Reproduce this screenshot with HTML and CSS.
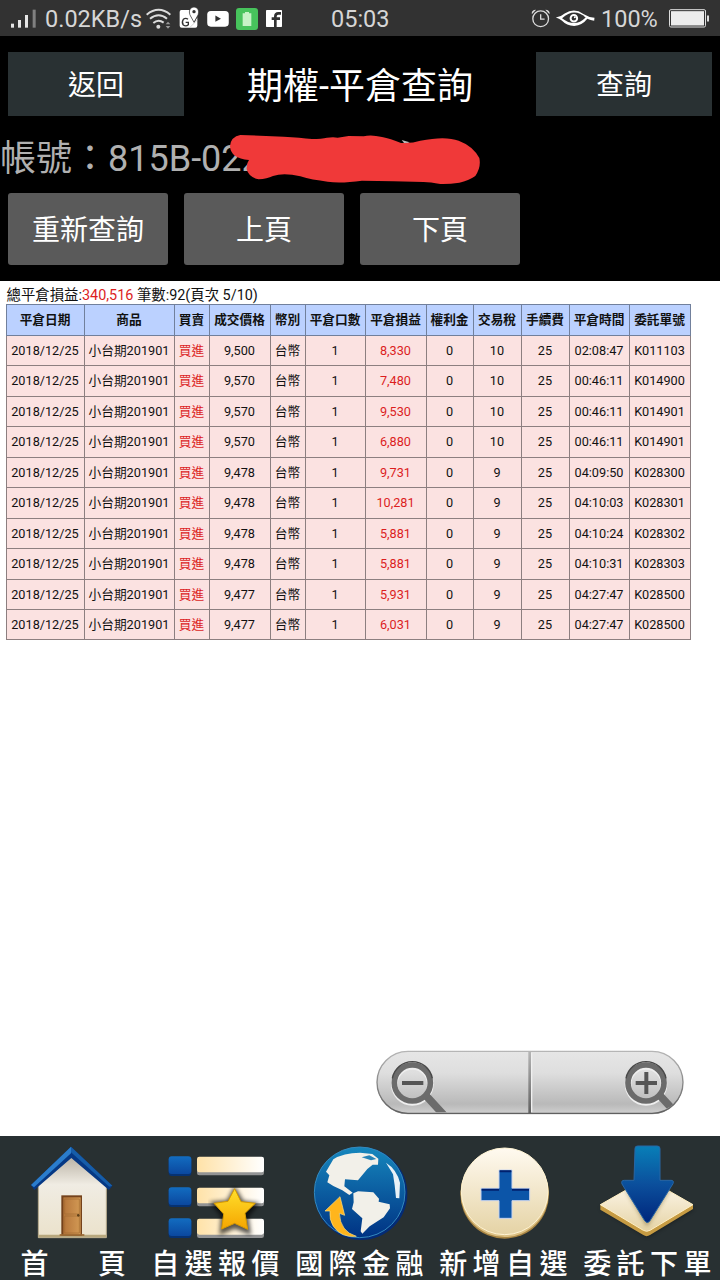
FILE: index.html
```html
<!DOCTYPE html>
<html lang="zh-Hant">
<head>
  <meta charset="UTF-8">
  <title>期權-平倉查詢</title>
  <link rel="stylesheet" href="styles.css">
</head>
<body>

  <div class="statusbar">
    <div class="status-left">
      <svg class="signal" viewBox="33 25 75 57">
        <g fill="#e6e6e6"><rect x="33" y="69" width="9" height="12"/><rect x="54" y="58" width="9" height="23"/><rect x="75" y="43" width="9" height="38"/></g>
        <rect x="98" y="27" width="9" height="54" fill="#808080"/>
      </svg>
      <span class="speed">0.02KB/s</span>
      <svg class="wifi" viewBox="438 22 78 63">
        <g fill="none" stroke="#dcdcdc" stroke-width="6"><path d="M440 42Q476 13 511 42"/><path d="M450 54Q476 33 501 54"/><path d="M460 67Q475 54 491 66"/></g>
        <circle cx="475" cy="78" r="6" fill="#dcdcdc"/>
        <path d="M497 71l7-8 7 8zM497 76l7 8 7-8z" fill="#999"/>
      </svg>
      <svg class="gmap" viewBox="538 19 60 63">
        <path d="M545 28H570Q567 40 579 57L584 66 593 50V75Q593 81 587 81H546Q540 81 540 75V34Q540 28 545 28Z" fill="#fff"/>
        <path d="M583 19Q596 20 597 34 597 42 590 52L583 65 576 52Q569 42 569 34 570 20 583 19Z" fill="#fff" stroke="#323232" stroke-width="2"/>
        <circle cx="583" cy="33" r="5" fill="#323232"/>
        <path d="M565 56Q558 50 551 56 545 65 551 73 559 79 566 72V65H558" fill="none" stroke="#323232" stroke-width="4"/>
        <path d="M571 80L593 58" stroke="#bbb" stroke-width="2"/>
      </svg>
      <svg class="youtube" viewBox="621 30 66 49">
        <rect x="621" y="30" width="66" height="48" rx="11" fill="#fff"/><path d="M646 44v19l17-9.500z" fill="#323232"/>
      </svg>
      <svg class="saver" viewBox="708 21 66 66">
        <rect x="708" y="21" width="66" height="66" rx="9" fill="#47c35c"/><path d="M728 37h7v-4h12v4h7v38h-26z" fill="#c7f3c7"/>
      </svg>
      <svg class="facebook" viewBox="798 30 48 51">
        <rect x="798" y="30" width="48" height="51" rx="2" fill="#fff"/><path d="M843 40h-8q-9 0-9 10v31M815 56h25" stroke="#323232" stroke-width="8" fill="none"/>
      </svg>
    </div>
    <span class="clock">05:03</span>
    <div class="status-right">
      <svg class="alarm" viewBox="692 25 60 58">
        <circle cx="721" cy="55" r="24" fill="none" stroke="#ddd" stroke-width="4"/>
        <path d="M721 41v15h12" fill="none" stroke="#ddd" stroke-width="4"/>
        <path d="M694 41q-2-14 13-14zM748 41q2-14-13-14z" fill="#ddd"/>
      </svg>
      <svg class="eye" viewBox="764 25 124 58">
        <path d="M766 51Q782 49 793 39 822 20 850 40 866 50 884 52L883 61Q872 59 862 55 847 75 822 77 799 76 784 60 776 54 766 51Z" fill="#fff"/>
        <path d="M785 53Q822 19 857 51 824 84 785 53Z" fill="#323232"/>
        <circle cx="821" cy="53" r="10" fill="none" stroke="#fff" stroke-width="6"/><circle cx="824" cy="50" r="3" fill="#fff"/>
      </svg>
      <span class="percent">100%</span>
      <svg class="battery" viewBox="1107 26 120 56">
        <rect x="1108.500" y="27.500" width="108" height="52" rx="4" fill="none" stroke="#ddd" stroke-width="3"/>
        <rect x="1113" y="32" width="99" height="43" fill="#ececec"/><rect x="1221" y="45" width="6" height="18" fill="#ddd"/>
      </svg>
    </div>
  </div>

  <header>
    <button class="nav-btn">返回</button>
    <h1>期權-平倉查詢</h1>
    <button class="nav-btn">查詢</button>
  </header>

  <div class="account">
    帳號：815B-022
    <svg class="scribble" viewBox="680 270 770 180">
      <path d="M1204 300l24 7-14 6z" fill="#bbb"/>
      <path d="M720 285L850 290Q900 293 935 297 965 297 980 293 1000 291 1012 293L1045 288 1090 289Q1112 283 1145 291 1170 296 1202 309 1235 311 1260 302 1335 287 1375 302 1418 318 1437 354 1443 382 1425 408 1405 422 1377 428 1345 433 1320 432 1290 426 1270 426L1180 424 1085 422Q1020 431 982 425 935 420 900 409 850 397 818 408 800 417 775 418 745 412 739 388 738 370 746 360 690 355 689 318 692 290 720 285Z" fill="#f03939"/>
    </svg>
  </div>

  <div class="toolbar">
    <button class="page-btn">重新查詢</button>
    <button class="page-btn">上頁</button>
    <button class="page-btn">下頁</button>
  </div>

  <main>
    <p class="summary">總平倉損益:<span class="red">340,516</span> 筆數:92(頁次 5/10)</p>
    <table>
      <colgroup>
        <col class="w78"><col class="w90"><col class="w35"><col class="w61"><col class="w35"><col class="w60">
        <col class="w61"><col class="w47"><col class="w48"><col class="w48"><col class="w60"><col class="w61">
      </colgroup>
      <thead>
        <tr>
          <th>平倉日期</th><th>商品</th><th>買賣</th><th>成交價格</th><th>幣別</th><th>平倉口數</th>
          <th>平倉損益</th><th>權利金</th><th>交易稅</th><th>手續費</th><th>平倉時間</th><th>委託單號</th>
        </tr>
      </thead>
      <tbody id="rows"></tbody>
    </table>

    <svg class="zoom-control" viewBox="0 0 990 255">
      <defs>
        <linearGradient id="pill" x2="0" y2="1"><stop stop-color="#e6e6e6"/><stop offset=".35" stop-color="#dedede"/><stop offset=".85" stop-color="#b9b9b9"/><stop offset="1" stop-color="#cfcfcf"/></linearGradient>
        <linearGradient id="edge" x2="0" y2="1"><stop stop-color="#b5b5b5"/><stop offset="1" stop-color="#606060"/></linearGradient>
        <clipPath id="pillClip"><rect x="22" y="36" width="916" height="181" rx="90"/></clipPath>
      </defs>
      <rect x="21" y="36" width="918" height="187" rx="93" fill="#aaa"/>
      <rect x="21" y="34" width="918" height="186" rx="93" fill="url(#pill)" stroke="url(#edge)" stroke-width="4"/>
      <path d="M485 38V216" stroke="#f0f0f0" stroke-width="4"/>
      <rect x="475" y="35" width="8" height="185" fill="url(#edge)"/>
      <g clip-path="url(#pillClip)">
        <g fill="none" stroke="#eee" stroke-width="20"><circle cx="127" cy="133" r="54"/><circle cx="828" cy="133" r="54"/></g>
        <g stroke="#6b6b6b" stroke-width="23"><path d="M168 167L226 230M870 167L928 230"/></g>
        <g fill="none" stroke="#6b6b6b" stroke-width="17"><circle cx="127" cy="129" r="54"/><circle cx="828" cy="129" r="54"/></g>
        <g fill="none" stroke="#484848" stroke-width="4"><path d="M67 115A61 61 0 0 1 187 115M768 115A61 61 0 0 1 888 115"/></g>
        <g stroke="#555" stroke-width="12"><path d="M96 129H160M797 129H861M829 96V162"/></g>
      </g>
    </svg>
  </main>

  <footer>
    <a class="tab">
      <svg viewBox="0 18 432 318">
        <defs>
          <linearGradient id="blue" x2="0" y2="1"><stop stop-color="#1687bd"/><stop offset="1" stop-color="#003283"/></linearGradient>
          <linearGradient id="arrow" x2="0" y2="1"><stop stop-color="#087fb8"/><stop offset=".5" stop-color="#0b4f9c"/><stop offset="1" stop-color="#00267c"/></linearGradient>
          <linearGradient id="blueBox" x2="0" y2="1"><stop stop-color="#126cc0"/><stop offset="1" stop-color="#0b489f"/></linearGradient>
          <linearGradient id="cream" x2="0" y2="1"><stop stop-color="#fffaf0"/><stop offset="1" stop-color="#e5d3a5"/></linearGradient>
          <linearGradient id="wall" x2="0" y2="1"><stop stop-color="#b8b1a4"/><stop offset=".35" stop-color="#f0ece3"/><stop offset="1" stop-color="#ebe2cb"/></linearGradient>
          <linearGradient id="bar"><stop stop-color="#ffe2a8"/><stop offset="1" stop-color="#fff"/></linearGradient>
          <linearGradient id="gold" x2="0" y2="1"><stop stop-color="#ffe02c"/><stop offset="1" stop-color="#f5a500"/></linearGradient>
          <linearGradient id="door"><stop stop-color="#b5753a"/><stop offset="1" stop-color="#d39a55"/></linearGradient>
          <filter id="soft"><feGaussianBlur stdDeviation="7"/></filter>
        </defs>
        <path d="M115 165L214 78 319 165V323H115Z" fill="url(#wall)" stroke="#b9ad8e" stroke-width="3"/>
        <path d="M115 318H319" stroke="#b8a87e" stroke-width="8"/>
        <rect x="184" y="196" width="62" height="121" fill="#74421b"/>
        <rect x="190" y="202" width="52" height="113" fill="url(#door)"/>
        <path d="M194 207H238V252H194ZM194 258H238V309H194Z" fill="none" stroke="#a16b31" stroke-width="2"/>
        <path d="M179 315H253" stroke="#9a6832" stroke-width="5"/><circle cx="235" cy="256" r="4" fill="#604018"/>
        <path d="M93 165L213 50 337 167 327 180 214 84 103 180Z" fill="#063884"/>
        <path d="M93 165L213 50 213 70 102 172Z" fill="#2b7dcc"/>
        <path d="M213 50L337 167 328 170 213 67Z" fill="#165da9"/>
      </svg>
      <span>首<i></i>頁</span>
    </a>
    <a class="tab">
      <svg viewBox="432 18 432 318">
        <g fill="#063273"><rect x="506" y="82" width="68" height="56" rx="9"/><rect x="506" y="175" width="68" height="56" rx="9"/><rect x="506" y="268" width="68" height="56" rx="9"/></g>
        <g fill="url(#blueBox)"><rect x="506" y="79" width="68" height="53" rx="9"/><rect x="506" y="172" width="68" height="53" rx="9"/><rect x="506" y="265" width="68" height="53" rx="9"/></g>
        <g fill="#929394"><rect x="591" y="85" width="201" height="51" rx="7"/><rect x="591" y="178" width="201" height="51" rx="7"/><rect x="591" y="271" width="201" height="53" rx="7"/></g>
        <g fill="url(#bar)"><rect x="591" y="80" width="201" height="47" rx="7"/><rect x="591" y="173" width="201" height="47" rx="7"/><rect x="591" y="266" width="201" height="48" rx="7"/></g>
        <path d="M704 178L727 217 769 223 740 259 747 308 704 290 664 308 668 256 638 220 684 216Z" fill="#000" stroke="#000" stroke-width="10" opacity=".65" filter="url(#soft)"/>
        <path d="M704 176L723 215 766 220 735 250 743 298 704 280 665 297 671 252 642 220 684 214Z" fill="url(#gold)" stroke="#d79a00" stroke-width="3" stroke-linejoin="round"/>
      </svg>
      <span>自選報價</span>
    </a>
    <a class="tab">
      <svg viewBox="-6 18 432 318">
        <circle cx="213" cy="191" r="139" fill="#032b76"/>
        <circle cx="209" cy="187" r="136" fill="url(#blue)" stroke="#3489be" stroke-width="3"/>
        <path d="M108 125L130 88Q160 68 210 68L247 72 265 86 264 104 248 104 232 117 204 151 165 148 163 169 188 188 178 195 157 181 130 168 112 157 118 136Z" fill="#f2f0e9"/>
        <path d="M215 82L238 76 259 87 243 91Z" fill="#2683b6"/>
        <path d="M190 190L204 184 250 187 267 206 266 215 299 223 300 235 281 262 239 289 217 311 212 304 217 265 186 237 191 217Z" fill="#f2f0e9"/>
        <path d="M288 98Q320 118 330 158L328 205 318 204 314 166 309 133Z" fill="#e9f1f7"/>
        <path d="M105 243L150 200 164 256 148 250Q151 305 199 319 154 324 130 289 117 268 120 243Z" fill="#ffb51c" stroke="#ffe084" stroke-width="2"/>
      </svg>
      <span>國際金融</span>
    </a>
    <a class="tab">
      <svg viewBox="6 18 432 318">
        <circle cx="224" cy="193" r="133" fill="#a98543"/>
        <circle cx="224" cy="189" r="132" fill="#ddc184"/>
        <circle cx="224" cy="184" r="130" fill="url(#cream)" stroke="#fff4d4" stroke-width="3"/>
        <path d="M207 120H246V175H299V212H246V265H207V212H153V175H207Z" fill="#0c55a8" stroke="#c8d4ee" stroke-width="3"/>
        <path d="M209 124H244M155 179H207M246 179H297" stroke="#00206d" stroke-width="6"/>
      </svg>
      <span>新增自選</span>
    </a>
    <a class="tab">
      <svg viewBox="438 18 432 318">
        <path d="M512 235L651 320 790 237 650 160Z" fill="#000" opacity=".5" filter="url(#soft)"/>
        <path d="M511 224L641 150Q650 145 660 150L789 224V237L660 315Q650 322 640 315L511 239Z" fill="#c69b43"/>
        <path d="M511 224L641 150Q650 145 660 150L789 224 660 301Q650 307 640 301Z" fill="url(#cream)" stroke="#fff0c5" stroke-width="3"/>
        <path d="M586 177L651 290 721 177Z" fill="#6b521e" opacity=".5" filter="url(#soft)"/>
        <path d="M615 55Q615 48 623 48H682Q690 48 690 56V151H723Q733 151 729 161L660 272Q652 283 644 272L576 162Q572 151 583 151H612Z" fill="url(#arrow)" stroke="#2866a4" stroke-width="3"/>
      </svg>
      <span>委託下單</span>
    </a>
  </footer>

  <script>
    // date, product and lot size are the same on every row
    const trades = [
      ['9,500', '8,330', '10', '02:08:47', 'K011103'],
      ['9,570', '7,480', '10', '00:46:11', 'K014900'],
      ['9,570', '9,530', '10', '00:46:11', 'K014901'],
      ['9,570', '6,880', '10', '00:46:11', 'K014901'],
      ['9,478', '9,731', '9', '04:09:50', 'K028300'],
      ['9,478', '10,281', '9', '04:10:03', 'K028301'],
      ['9,478', '5,881', '9', '04:10:24', 'K028302'],
      ['9,478', '5,881', '9', '04:10:31', 'K028303'],
      ['9,477', '5,931', '9', '04:27:47', 'K028500'],
      ['9,477', '6,031', '9', '04:27:47', 'K028500']
    ];

    document.getElementById('rows').innerHTML = trades.map(([price, profit, tax, time, order]) => `
      <tr>
        <td>2018/12/25</td><td>小台期201901</td><td class="red">買進</td><td>${price}</td>
        <td>台幣</td><td>1</td><td class="red">${profit}</td><td>0</td>
        <td>${tax}</td><td>25</td><td>${time}</td><td>${order}</td>
      </tr>`).join('');
  </script>

</body>
</html>
```
FILE: styles.css
```css
* {
  box-sizing: border-box;
}

body {
  margin: 0;
  width: 720px;
  height: 1280px;
  display: flex;
  flex-direction: column;
  overflow: hidden;
  background: #000;
  color: #fff;
  font-family: Roboto, "Noto Sans CJK TC", sans-serif;
}

svg {
  display: block;
  flex-shrink: 0;
}

button {
  border: none;
  padding: 0 0 2px;
  color: #fff;
  font-family: inherit;
  font-size: 28px;
}

/* status bar */
.statusbar {
  height: 36px;
  flex-shrink: 0;
  display: grid;
  grid-template-columns: 331px 200px 1fr;
  align-items: center;
  background: #323232;
  color: #d6d6d6;
  font-size: 23.5px;
  line-height: 36px;
}

.status-left, .status-right {
  display: flex;
  align-items: center;
}

.status-left {
  padding-left: 11px;
}

.clock {
  padding-top: 1px;
}

.signal { width: 25px; height: 19px; }
.speed { width: 101px; padding-left: 9px; margin-right: 9px; flex-shrink: 0; white-space: nowrap; }
.wifi { width: 26px; height: 21px; }
.gmap { width: 20px; height: 21px; margin: 0 8px 2px 7px; }
.youtube { width: 22px; height: 16px; margin-right: 7px; }
.saver { width: 22px; height: 22px; margin-right: 8px; }
.facebook { width: 16px; height: 17px; }
.alarm { width: 20px; height: 19px; margin-right: 4px; }
.eye { width: 41px; height: 19px; }
.percent { width: 68px; margin-left: 5px; }
.battery { width: 40px; height: 19px; }

/* title row */
header {
  height: 96px;
  flex-shrink: 0;
  padding: 16px 8px;
  display: flex;
  align-items: center;
  justify-content: space-between;
}

header h1 {
  margin: 0;
  padding-top: 5px;
  font-size: 36px;
  font-weight: 400;
  line-height: 64px;
}

.nav-btn {
  width: 176px;
  height: 64px;
  background: #293133;
}

.account {
  position: relative;
  height: 53px;
  flex-shrink: 0;
  font-size: 36px;
  line-height: 55px;
  color: #b0b0b0;
}

.scribble {
  position: absolute;
  left: 226.67px;
  top: -2px;
  width: 256.67px;
  height: 60px;
}

.toolbar {
  height: 96px;
  flex-shrink: 0;
  display: flex;
  gap: 16px;
  padding: 8px 8px 0;
}

.page-btn {
  width: 160px;
  height: 72px;
  background: #5a5a5a;
  border-radius: 3px;
}

/* report */
main {
  position: relative;
  flex: 1;
  min-height: 0;
  background: #fff;
  color: #111;
  padding: 5px 6px 0;
}

.summary {
  margin: 0;
  padding-left: 0.5px;
  height: 18px;
  font-size: 14.4px;
  line-height: 20px;
}

table {
  width: 685px;
  table-layout: fixed;
  border-collapse: collapse;
  font-size: 12.7px;
  line-height: 16px;
}

th, td {
  padding: 0 1px 0 0;
  border: 1px solid #8c7f80;
  text-align: center;
  white-space: nowrap;
}

th {
  height: 31px;
  background: #bbd1ff;
  border-color: #71809c;
}

td {
  height: 31px;
  background: #fbe2e1;
}

tbody tr:nth-child(odd) td, tbody tr:last-child td {
  height: 30px;
}

.w35 { width: 35px; }
.w47 { width: 47px; }
.w48 { width: 48px; }
.w60 { width: 60px; }
.w61 { width: 61px; }
.w78 { width: 78px; }
.w90 { width: 90px; }

.red {
  color: #dc1e1e;
}

.zoom-control {
  position: absolute;
  left: 370px;
  bottom: 11px;
  width: 330px;
  height: 85px;
}

/* bottom menu */
footer {
  height: 144px;
  flex-shrink: 0;
  display: grid;
  grid-template-columns: repeat(5, 144px);
  background: #283032;
}

.tab {
  display: flex;
  flex-direction: column;
}

.tab svg {
  width: 144px;
  height: 106px;
}

.tab span {
  height: 38px;
  padding-left: 4px;
  font-size: 28px;
  font-weight: 500;
  line-height: 45px;
  letter-spacing: 5.4px;
  text-align: center;
  white-space: nowrap;
}

.tab:first-child span {
  padding-left: 8px;
}

.tab i {
  display: inline-block;
  width: 44px;
}
```
